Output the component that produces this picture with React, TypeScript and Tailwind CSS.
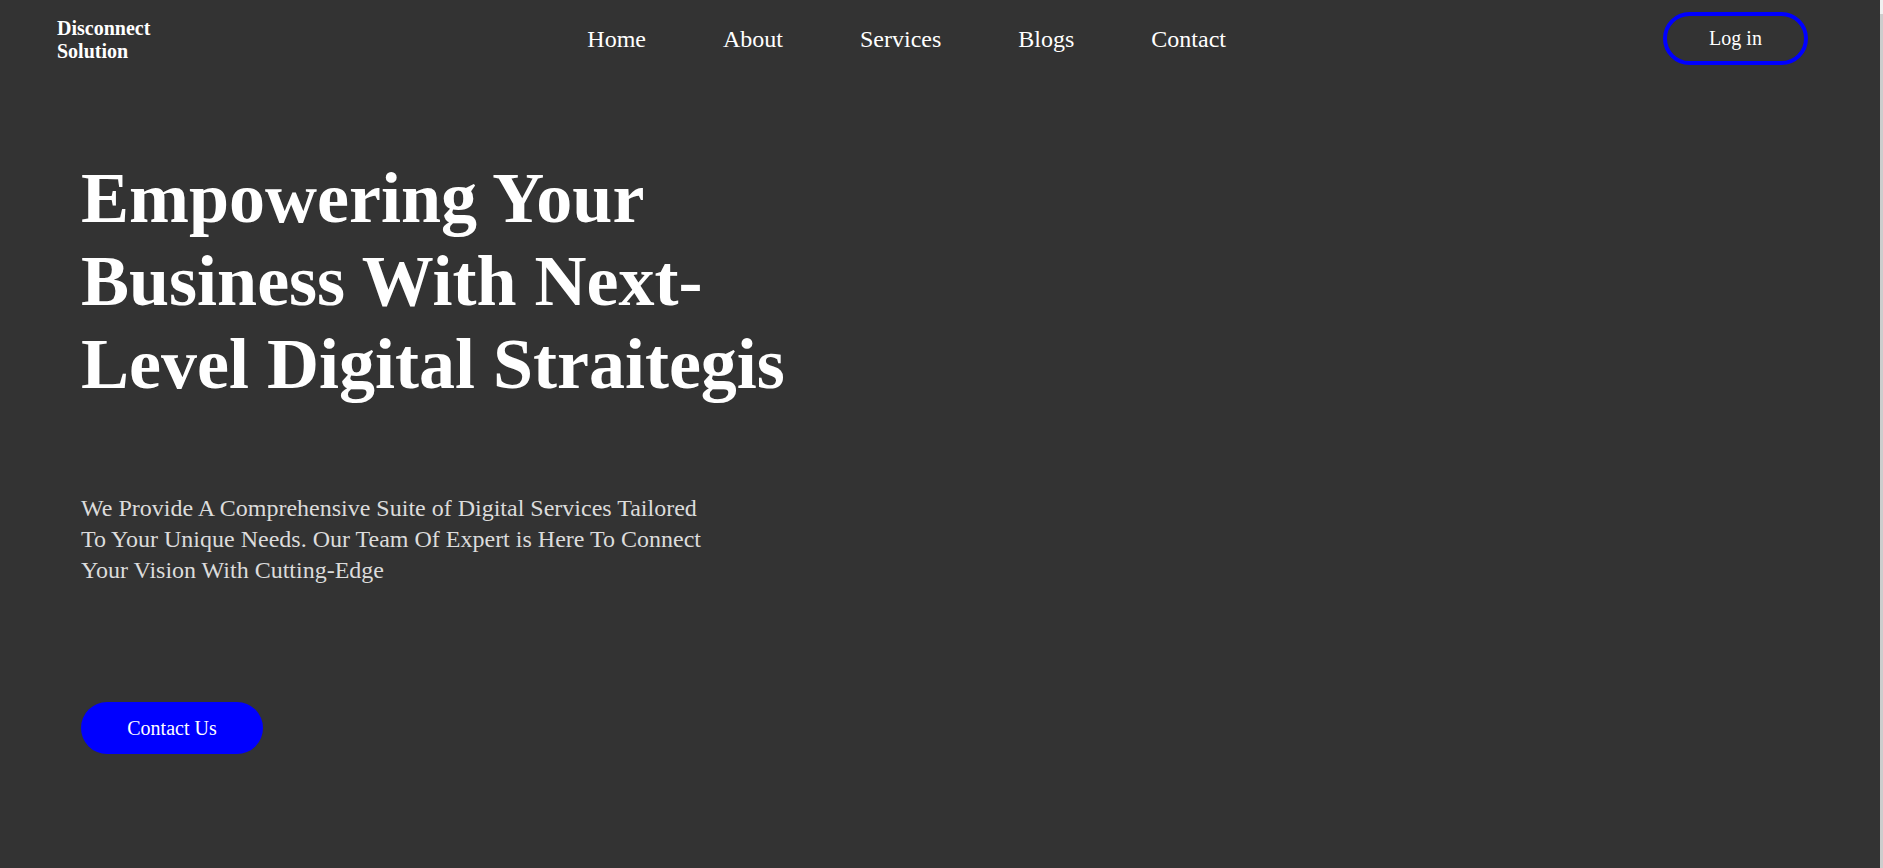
const NAV_LINKS = ['Home', 'About', 'Services', 'Blogs', 'Contact'] as const;

const Header = () => {
  return (
    <header className="flex items-center justify-between py-[12px] pl-[57px] pr-[72px]">
      <p className="pt-[3px] text-[20px] font-bold leading-[23px] text-white">
        Disconnect
        <br />
        Solution
      </p>
      <nav>
        <ul className="flex items-center gap-[77px] text-[24px] leading-[28px] text-white">
          {NAV_LINKS.map((link) => (
            <li key={link}>
              <a href="#" className="cursor-pointer">
                {link}
              </a>
            </li>
          ))}
        </ul>
      </nav>
      <button className="h-[53px] w-[145px] cursor-pointer rounded-full border-4 border-[#0000ff] text-[20px] leading-[23px] text-white">
        Log in
      </button>
    </header>
  );
};

const Hero = () => {
  return (
    <section className="pl-[81px] pt-[80px]">
      <h1 className="w-[740px] text-[72px] font-bold leading-[83px] text-white">
        Empowering Your Business With Next-Level Digital Straitegis
      </h1>
      <p className="mt-[87px] w-[640px] text-[24px] leading-[31px] text-[#dcdcdc]">
        We Provide A Comprehensive Suite of Digital Services Tailored To Your
        Unique Needs. Our Team Of Expert is Here To Connect Your Vision With
        Cutting-Edge
      </p>
      <button className="mt-[116px] h-[52px] w-[182px] cursor-pointer rounded-full bg-[#0000ff] text-[20px] leading-[23px] text-white">
        Contact Us
      </button>
    </section>
  );
};

export default function App() {
  return (
    <div className="flex min-h-screen bg-[#333333] font-['Liberation_Serif','Times_New_Roman',serif]">
      <div className="flex-1">
        <Header />
        <Hero />
      </div>
      {/* scrollbar edge seen on the right of the shot */}
      <div className="flex w-[3px] flex-col bg-[#cdcdcd]">
        <div className="h-[14px] bg-[#f0f0f0]"></div>
      </div>
    </div>
  );
}
